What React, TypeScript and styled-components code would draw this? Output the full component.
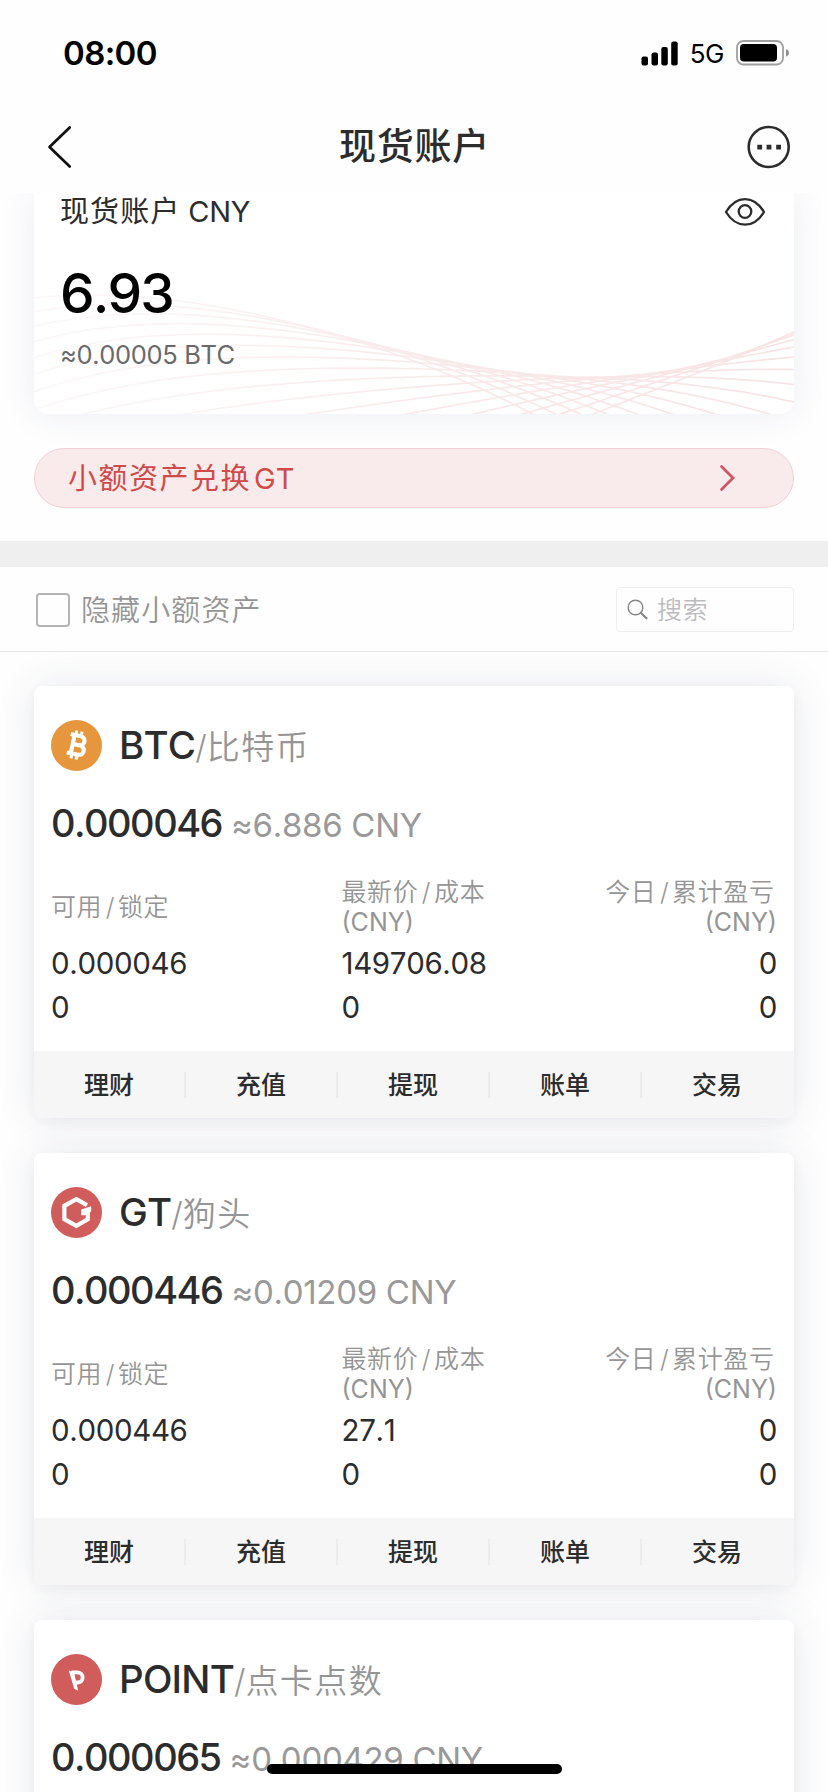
import React from 'react';
import styled, { createGlobalStyle } from 'styled-components';

const GlobalStyle = createGlobalStyle`
  * { box-sizing: border-box; }
  body {
    margin: 0;
    background: #fefefe;
    font-family: Inter, "Noto Sans CJK SC", sans-serif;
    font-kerning: none;
    color: #2c2c2c;
  }
`;

const Screen = styled.div`
  position: relative;
  width: 828px;
  height: 1792px;
  overflow: hidden;
  display: flex;
  flex-direction: column;
`;

const StatusBar = styled.div`
  height: 100px;
  padding: 6px 38px 0 63px;
  display: flex;
  align-items: center;
  justify-content: space-between;
  color: #000;
  flex: none;
`;

const Clock = styled.span`
  font-size: 33px;
  font-weight: 600;
  letter-spacing: -0.6px;
`;

const StatusIcons = styled.div`
  display: flex;
  align-items: center;
`;

const Network = styled.span`
  font-size: 26px;
  letter-spacing: -0.5px;
  margin: 1px 12px 0 11px;
`;

const NavBar = styled.header`
  height: 93px;
  flex: none;
  padding: 0 37px 0 47px;
  display: grid;
  grid-template-columns: 44px 1fr 44px;
  align-items: center;
`;

const Title = styled.h1`
  margin: 0;
  padding-right: 9px;
  font-size: 37px;
  line-height: 50px;
  font-weight: 500;
  letter-spacing: 0.8px;
  text-align: center;
`;

const Content = styled.main`
  flex: 1;
  min-height: 0;
  overflow: hidden;
`;

const Balance = styled.section`
  position: relative;
  margin: 0 34px;
  height: 221px;
  padding: 0 26px;
  background: #fff;
  border-radius: 0 0 14px 14px;
  box-shadow: 0 0 36px rgba(50, 60, 130, 0.085);
`;

const Waves = styled.svg`
  position: absolute;
  left: 0;
  top: 0;
  border-radius: 0 0 14px 14px;
`;

const BalanceHead = styled.div`
  position: relative;
  display: flex;
  justify-content: space-between;
  align-items: center;
  height: 37px;
  padding-right: 2px;
  font-size: 29px;
`;

const BalanceName = styled.span`
  padding-bottom: 5px;
`;

const Spaced = styled.span<{ $gap: number }>`
  letter-spacing: ${(p) => p.$gap}px;
`;

const Ticker = styled.span`
  margin-left: 3px;
`;

const Amount = styled.div`
  position: relative;
  margin-top: 29px;
  font-size: 55px;
  line-height: 68px;
  font-weight: 500;
  letter-spacing: -1.9px;
  color: #000;
`;

const Approx = styled.div`
  position: relative;
  margin-top: 12px;
  font-size: 25.5px;
  line-height: 32px;
  letter-spacing: -0.35px;
  color: #6a6a6a;
`;

const Convert = styled.button`
  display: flex;
  align-items: center;
  justify-content: space-between;
  width: 760px;
  height: 60px;
  margin: 34px 34px 33px;
  padding: 0 57px 4px 33px;
  border: 1.5px solid #f0d0d4;
  border-radius: 30px;
  background: #f9ebeb;
  color: #d04a4a;
  font: inherit;
  font-size: 29px;
`;

const ConvertArrow = styled.svg`
  margin-top: 4px;
`;

const Band = styled.div`
  height: 26px;
  background: #efefef;
`;

const Filters = styled.div`
  height: 85px;
  padding: 1px 34px 0 36px;
  display: flex;
  align-items: center;
  border-bottom: 1px solid #e9e9e9;
`;

const Checkbox = styled.span`
  width: 34px;
  height: 34px;
  border: 2px solid #b4b4b4;
  border-radius: 4px;
`;

const FilterLabel = styled.span`
  margin-left: 11px;
  padding-bottom: 4px;
  flex: 1;
  font-size: 29px;
  font-weight: 350;
  letter-spacing: 1.1px;
  color: #959595;
`;

const Search = styled.div`
  width: 178px;
  height: 45px;
  padding-left: 10px;
  display: flex;
  align-items: center;
  gap: 9px;
  border: 1.5px solid #eee;
  border-radius: 4px;
`;

const Placeholder = styled.span`
  padding-bottom: 4px;
  font-size: 25px;
  font-weight: 350;
  letter-spacing: 0.6px;
  color: #bcbcc0;
`;

const Assets = styled.div`
  padding: 34px 34px 0;
  display: flex;
  flex-direction: column;
  gap: 35px;
`;

const Card = styled.article`
  flex: none;
  height: 432px;
  display: flex;
  flex-direction: column;
  border-radius: 8px;
  background: #fff;
  box-shadow: 0 0 40px rgba(45, 55, 110, 0.1), 0 4px 12px rgba(40, 45, 70, 0.045);
  overflow: hidden;
`;

const CardBody = styled.div`
  flex: 1;
  padding: 34px 17px 0;
`;

const CoinRow = styled.div`
  display: flex;
  align-items: center;
  gap: 17px;
  height: 51px;
`;

const CoinName = styled.div`
  padding-top: 1px;
  font-size: 38.5px;
  line-height: 51px;
  font-weight: 450;
  letter-spacing: -0.8px;
  white-space: nowrap;
`;

const CoinAlias = styled.span`
  font-size: 33px;
  font-weight: 350;
  letter-spacing: 1.4px;
  color: #959595;
`;

const Slash = styled.span<{ $pad: number }>`
  margin: 0 ${(p) => p.$pad}px;
  letter-spacing: 0;
`;

const Holding = styled.div`
  margin-top: 28px;
  font-size: 38px;
  line-height: 48px;
  font-weight: 450;
  letter-spacing: -1.5px;
  white-space: nowrap;
`;

const Worth = styled.span`
  margin-left: 9px;
  font-size: 33px;
  font-weight: 380;
  letter-spacing: -0.3px;
  color: #999;
`;

const Stats = styled.div`
  margin-top: 28px;
  display: grid;
  grid-template-columns: 290.5px 1fr 1fr;
`;

const Label = styled.div<{ $right?: boolean }>`
  display: flex;
  flex-direction: column;
  justify-content: center;
  align-items: ${(p) => (p.$right ? 'flex-end' : 'flex-start')};
  height: 60px;
  margin-bottom: 3.5px;
  font-size: 25px;
  line-height: 30px;
  font-weight: 350;
  letter-spacing: 0.6px;
  color: #959595;
  white-space: nowrap;
`;

const LabelText = styled.span<{ $inset?: boolean }>`
  margin-right: ${(p) => (p.$inset ? 2.5 : 0)}px;
`;

const Unit = styled.span`
  font-weight: 400;
  letter-spacing: 0;
`;

const Value = styled.div<{ $right?: boolean }>`
  font-size: 29.5px;
  line-height: 44.5px;
  letter-spacing: -0.35px;
  text-align: ${(p) => (p.$right ? 'right' : 'left')};
`;

const Actions = styled.footer`
  height: 67px;
  display: grid;
  grid-template-columns: repeat(5, 1fr);
  align-items: center;
  background: #f6f6f6;
`;

const Action = styled.button`
  height: 26px;
  padding: 0;
  border: 0;
  border-right: 2px solid #ececec;
  background: none;
  color: #2c2c2c;
  font: inherit;
  font-size: 25px;
  line-height: 26px;
  font-weight: 500;
  &:last-child { border-color: transparent; }
`;

const HomeIndicator = styled.div`
  position: absolute;
  left: 267px;
  top: 1764px;
  width: 295px;
  height: 10px;
  border-radius: 5px;
  background: #000;
`;

const WAVE_X = [0, 190, 380, 566, 760];
const WAVE_A = [105, 115, 168, 261, 439];
const WAVE_B = [13.5, 3, -5.2, -17.1, -38.75];
const WAVE_C = [0.35, 0.9, 0.9, 0.95, 1.25];

const interpolate = (ys: number[], x: number) =>
  ys.reduce((sum, y, i) => {
    let w = y;
    WAVE_X.forEach((xk, k) => {
      if (k !== i) w *= (x - xk) / (WAVE_X[i] - xk);
    });
    return sum + w;
  }, 0);

const wavePath = (j: number) => {
  const ys = WAVE_X.map((_, k) => WAVE_A[k] + WAVE_B[k] * j + WAVE_C[k] * j * j);
  const pts: string[] = [];
  for (let x = 0; x <= 760; x += 10) pts.push(`${x} ${interpolate(ys, x).toFixed(1)}`);
  return 'M' + pts.join('L');
};

const WaveLines = () => (
  <Waves width="760" height="221" viewBox="0 0 760 221" fill="none">
    <defs>
      <linearGradient id="wave" gradientUnits="userSpaceOnUse" x1="0" y1="0" x2="760" y2="0">
        <stop offset="0" stopColor="#fcf8f8" />
        <stop offset="0.25" stopColor="#fbf2f2" />
        <stop offset="0.5" stopColor="#f9eaea" />
        <stop offset="1" stopColor="#f8e3e3" />
      </linearGradient>
    </defs>
    {Array.from({ length: 16 }, (_, j) => (
      <path key={j} d={wavePath(j)} stroke="url(#wave)" strokeWidth="1.7" />
    ))}
  </Waves>
);

const BtcIcon = () => (
  <svg width="51" height="51" viewBox="0 0 51 51">
    <circle cx="25.5" cy="25.5" r="25.5" fill="#e6963c" />
    <g transform="rotate(12 26 25)" fill="none" stroke="#fff">
      <path d="M17.600 15.600H28a4.300 4.300 0 0 1 0 9.200h-6.400M28 24.800h1a4.700 4.700 0 0 1 0 9.600H17.600M21.600 15.600v18.800" strokeWidth="4.200" />
      <path d="M22.800 10.800v4.500M28.200 10.800v4.500M22.800 34.500v4.800M28.200 34.500v4.800" strokeWidth="3" />
    </g>
  </svg>
);

const GtIcon = () => (
  <svg width="51" height="51" viewBox="0 0 51 51">
    <circle cx="25.5" cy="25.5" r="25.5" fill="#d05c5c" />
    <path d="M36 18.200L25.300 12.200L13.400 18.800V32.200L25.300 38.800L36.800 32.200V23" fill="none" stroke="#fff" strokeWidth="4.200" />
    <path d="M30.200 22.600L40.200 19.300V24.400L34 28.200H30.200z" fill="#fff" />
  </svg>
);

const PointIcon = () => (
  <svg width="51" height="51" viewBox="0 0 51 51">
    <circle cx="25.5" cy="25.5" r="25.500" fill="#d05c5c" />
    <path d="M17.800 16.400l5.200 1.800 4.200 18.600-4-2z" fill="#fff" />
    <path d="M20.500 18.400h5.600c3.600 0 5.500 2.400 5.500 5.200s-1.800 4.900-4.400 4.900h-3" fill="none" stroke="#fff" strokeWidth="3.800" />
  </svg>
);

interface Asset {
  code: string;
  alias: string;
  icon: React.ReactNode;
  amount: string;
  worth: string;
  price?: string;
}

const ASSETS: Asset[] = [
  { code: 'BTC', alias: '比特币', icon: <BtcIcon />, amount: '0.000046', worth: '≈6.886 CNY', price: '149706.08' },
  { code: 'GT', alias: '狗头', icon: <GtIcon />, amount: '0.000446', worth: '≈0.01209 CNY', price: '27.1' },
  { code: 'POINT', alias: '点卡点数', icon: <PointIcon />, amount: '0.000065', worth: '≈0.000429 CNY' },
];

const ACTIONS = ['理财', '充值', '提现', '账单', '交易'];

const AssetCard = ({ asset }: { asset: Asset }) => (
  <Card>
    <CardBody>
      <CoinRow>
        {asset.icon}
        <CoinName>
          {asset.code}
          <CoinAlias><Slash $pad={0}>/</Slash>{asset.alias}</CoinAlias>
        </CoinName>
      </CoinRow>
      <Holding>
        {asset.amount}
        <Worth>{asset.worth}</Worth>
      </Holding>
      {asset.price && (
        <Stats>
          <Label><LabelText>可用<Slash $pad={3.5}>/</Slash>锁定</LabelText></Label>
          <Label>
            <LabelText>最新价<Slash $pad={3.5}>/</Slash>成本</LabelText>
            <Unit>(CNY)</Unit>
          </Label>
          <Label $right>
            <LabelText $inset>今日<Slash $pad={3.5}>/</Slash>累计盈亏</LabelText>
            <Unit>(CNY)</Unit>
          </Label>
          <Value>{asset.amount}</Value>
          <Value>{asset.price}</Value>
          <Value $right>0</Value>
          <Value>0</Value>
          <Value>0</Value>
          <Value $right>0</Value>
        </Stats>
      )}
    </CardBody>
    {asset.price && (
      <Actions>
        {ACTIONS.map((a) => (
          <Action key={a}>{a}</Action>
        ))}
      </Actions>
    )}
  </Card>
);

export default function App() {
  return (
    <>
      <GlobalStyle />
      <Screen>
        <StatusBar>
          <Clock>08:00</Clock>
          <StatusIcons>
            <svg width="38" height="25" viewBox="0 0 38 25">
              <rect x="0.5" y="15.5" width="6.5" height="9" rx="2" />
              <rect x="10.5" y="11.5" width="6.5" height="13" rx="2" />
              <rect x="20.3" y="6" width="6.5" height="18.5" rx="2" />
              <rect x="30.2" y="0.5" width="6.5" height="24" rx="2" />
            </svg>
            <Network>5G</Network>
            <svg width="54" height="26" viewBox="0 0 54 26">
              <rect x="1" y="1" width="46" height="23.5" rx="6.5" fill="none" stroke="#a0a0a0" strokeWidth="1.8" />
              <rect x="4" y="4" width="37" height="17.5" rx="3.8" />
              <path d="M50 9.2c4 1 4 6.2 0 7.2z" fill="#8f8f8f" />
            </svg>
          </StatusIcons>
        </StatusBar>
        <NavBar>
          <svg width="26" height="44" viewBox="0 0 26 44" fill="none" stroke="#111" strokeWidth="2.7" strokeLinecap="round" strokeLinejoin="round">
            <path d="M22.7 2.5L2.5 22L22.7 41.5" />
          </svg>
          <Title>现货账户</Title>
          <svg width="44" height="44" viewBox="0 0 44 44">
            <circle cx="21.7" cy="22" r="20" fill="none" stroke="#2c2c2c" strokeWidth="2.6" />
            <path d="M10.3 19.8h4.8v4.8h-4.8zM19.6 19.8h4.8v4.8h-4.8zM29.2 19.8h4.8v4.8h-4.8z" fill="#2c2c2c" />
          </svg>
        </NavBar>
        <Content>
          <Balance>
            <WaveLines />
            <BalanceHead>
              <BalanceName>
                <Spaced $gap={1.1}>现货账户</Spaced>
                <Spaced $gap={-0.3}> CNY</Spaced>
              </BalanceName>
              <svg width="42" height="30" viewBox="0 0 42 30" fill="none" stroke="#2c2c2c" strokeWidth="2.3">
                <path d="M2 15C7.500 6 13.500 2.200 21 2.200S34.500 6 40 15C34.500 24 28.500 27.600 21 27.600S7.500 24 2 15Z" strokeLinejoin="round" />
                <circle cx="21" cy="14.500" r="6.300" />
              </svg>
            </BalanceHead>
            <Amount>6.93</Amount>
            <Approx>≈0.00005 BTC</Approx>
          </Balance>
          <Convert>
            <span><Spaced $gap={1.5}>小额资产兑换</Spaced><Ticker>GT</Ticker></span>
            <ConvertArrow width="17" height="28" viewBox="0 0 17 28" fill="none" stroke="#cf5468" strokeWidth="2.8" strokeLinecap="round">
              <path d="M2.500 2.500L14 14L2.500 25.500" />
            </ConvertArrow>
          </Convert>
          <Band />
          <Filters>
            <Checkbox />
            <FilterLabel>隐藏小额资产</FilterLabel>
            <Search>
              <svg width="21" height="21" viewBox="0 0 21 21" fill="none" stroke="#858585" strokeLinecap="round">
                <circle cx="8.500" cy="8.500" r="7.300" strokeWidth="1.400" />
                <path d="M14 14L19.500 19.300" strokeWidth="2.200" />
              </svg>
              <Placeholder>搜索</Placeholder>
            </Search>
          </Filters>
          <Assets>
            {ASSETS.map((a) => (
              <AssetCard key={a.code} asset={a} />
            ))}
          </Assets>
        </Content>
        <HomeIndicator />
      </Screen>
    </>
  );
}
